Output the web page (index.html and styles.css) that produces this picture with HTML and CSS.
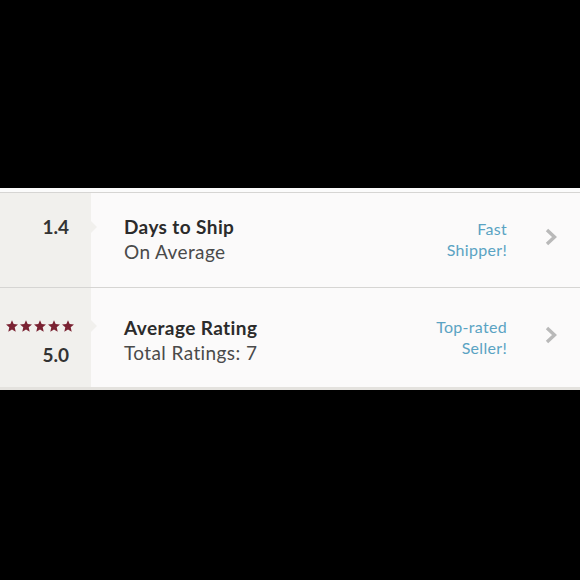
FILE: index.html
```html
<!DOCTYPE html>
<html lang="en">
<head>
    <meta charset="UTF-8">
    <meta name="viewport" content="width=device-width, initial-scale=1.0">
    <title>Seller Stats</title>
    <link rel="stylesheet" href="styles.css">
</head>
<body>
    <div class="stats">
        <div class="stat-row">
            <div class="stat-value">
                <span class="stat-number">1.4</span>
            </div>
            <div class="stat-text">
                <div class="stat-title">Days to Ship</div>
                <div class="stat-sub">On Average</div>
            </div>
            <div class="stat-badge">Fast<br>Shipper!</div>
            <svg class="chevron" viewBox="0 0 12 18" width="12" height="18">
                <polyline points="2,2 9.5,9 2,16" fill="none" stroke="#b9b9b9" stroke-width="3.4"/>
            </svg>
        </div>

        <div class="stat-row stat-row-rating">
            <div class="stat-value">
                <div class="stars">
                    <svg viewBox="0 0 24 23" width="12" height="12"><polygon points="12,0 15.3,7.6 24,8.4 17.4,14.1 19.4,23 12,18.4 4.6,23 6.6,14.1 0,8.4 8.7,7.6"/></svg>
                    <svg viewBox="0 0 24 23" width="12" height="12"><polygon points="12,0 15.3,7.6 24,8.4 17.4,14.1 19.4,23 12,18.4 4.6,23 6.6,14.1 0,8.4 8.7,7.6"/></svg>
                    <svg viewBox="0 0 24 23" width="12" height="12"><polygon points="12,0 15.3,7.6 24,8.4 17.4,14.1 19.4,23 12,18.4 4.6,23 6.6,14.1 0,8.4 8.7,7.6"/></svg>
                    <svg viewBox="0 0 24 23" width="12" height="12"><polygon points="12,0 15.3,7.6 24,8.4 17.4,14.1 19.4,23 12,18.4 4.6,23 6.6,14.1 0,8.4 8.7,7.6"/></svg>
                    <svg viewBox="0 0 24 23" width="12" height="12"><polygon points="12,0 15.3,7.6 24,8.4 17.4,14.1 19.4,23 12,18.4 4.6,23 6.6,14.1 0,8.4 8.7,7.6"/></svg>
                </div>
                <span class="stat-number">5.0</span>
            </div>
            <div class="stat-text">
                <div class="stat-title">Average Rating</div>
                <div class="stat-sub">Total Ratings: 7</div>
            </div>
            <div class="stat-badge">Top-rated<br>Seller!</div>
            <svg class="chevron" viewBox="0 0 12 18" width="12" height="18">
                <polyline points="2,2 9.5,9 2,16" fill="none" stroke="#b9b9b9" stroke-width="3.4"/>
            </svg>
        </div>
    </div>
</body>
</html>
```

FILE: styles.css
```css
body {
    margin: 0;
    background: #000;
    font-family: 'Lato', 'Noto Sans', sans-serif;
    color: #333;
    min-height: 580px;
    display: flex;
    flex-direction: column;
}

.stats {
    margin-top: 188px;
    background: #fbfafa;
    border-top: 4px solid #fbfbfb;
    border-bottom: 3px solid #e4e2de;
}

.stat-row {
    display: grid;
    grid-template-columns: 91px 1fr auto 35px;
    align-items: center;
    border-top: 1px solid #d6d5d3;
    min-height: 94px;
}

.stat-row-rating {
    min-height: 99px;
}

.stat-value {
    align-self: stretch;
    position: relative;
    background: #f1f0ed;
    padding: 21px 22px 0 0;
    text-align: right;
    line-height: 25px;
    font-size: 19px;
    font-weight: 700;
}

.stat-row-rating .stat-value {
    padding-top: 32px;
}

/* little pointer out of the grey column */
.stat-value::after {
    content: "";
    position: absolute;
    right: -6px;
    top: 28px;
    border-top: 6px solid transparent;
    border-bottom: 6px solid transparent;
    border-left: 6px solid #f1f0ed;
}

.stat-row-rating .stat-value::after {
    top: 32px;
}

.stars {
    display: flex;
    justify-content: flex-end;
    gap: 2px;
    height: 12px;
    margin-bottom: 10px;
    margin-right: -5px;
}

.stars svg {
    fill: #7a2232;
}

.stat-text {
    align-self: start;
    padding: 21px 0 0 33px;
    line-height: 25px;
    font-size: 19px;
    letter-spacing: 0.4px;
}

.stat-row-rating .stat-text {
    padding-top: 27px;
}

.stat-title {
    font-weight: 700;
    color: #2b2b2b;
}

.stat-sub {
    color: #4a4a4a;
}

.stat-badge {
    text-align: right;
    font-size: 16px;
    line-height: 21px;
    letter-spacing: 0.3px;
    color: #5aa3c3;
    margin-right: 38px;
    margin-bottom: 2px;
}

.chevron {
    display: block;
    margin-bottom: 6px;
}
```
